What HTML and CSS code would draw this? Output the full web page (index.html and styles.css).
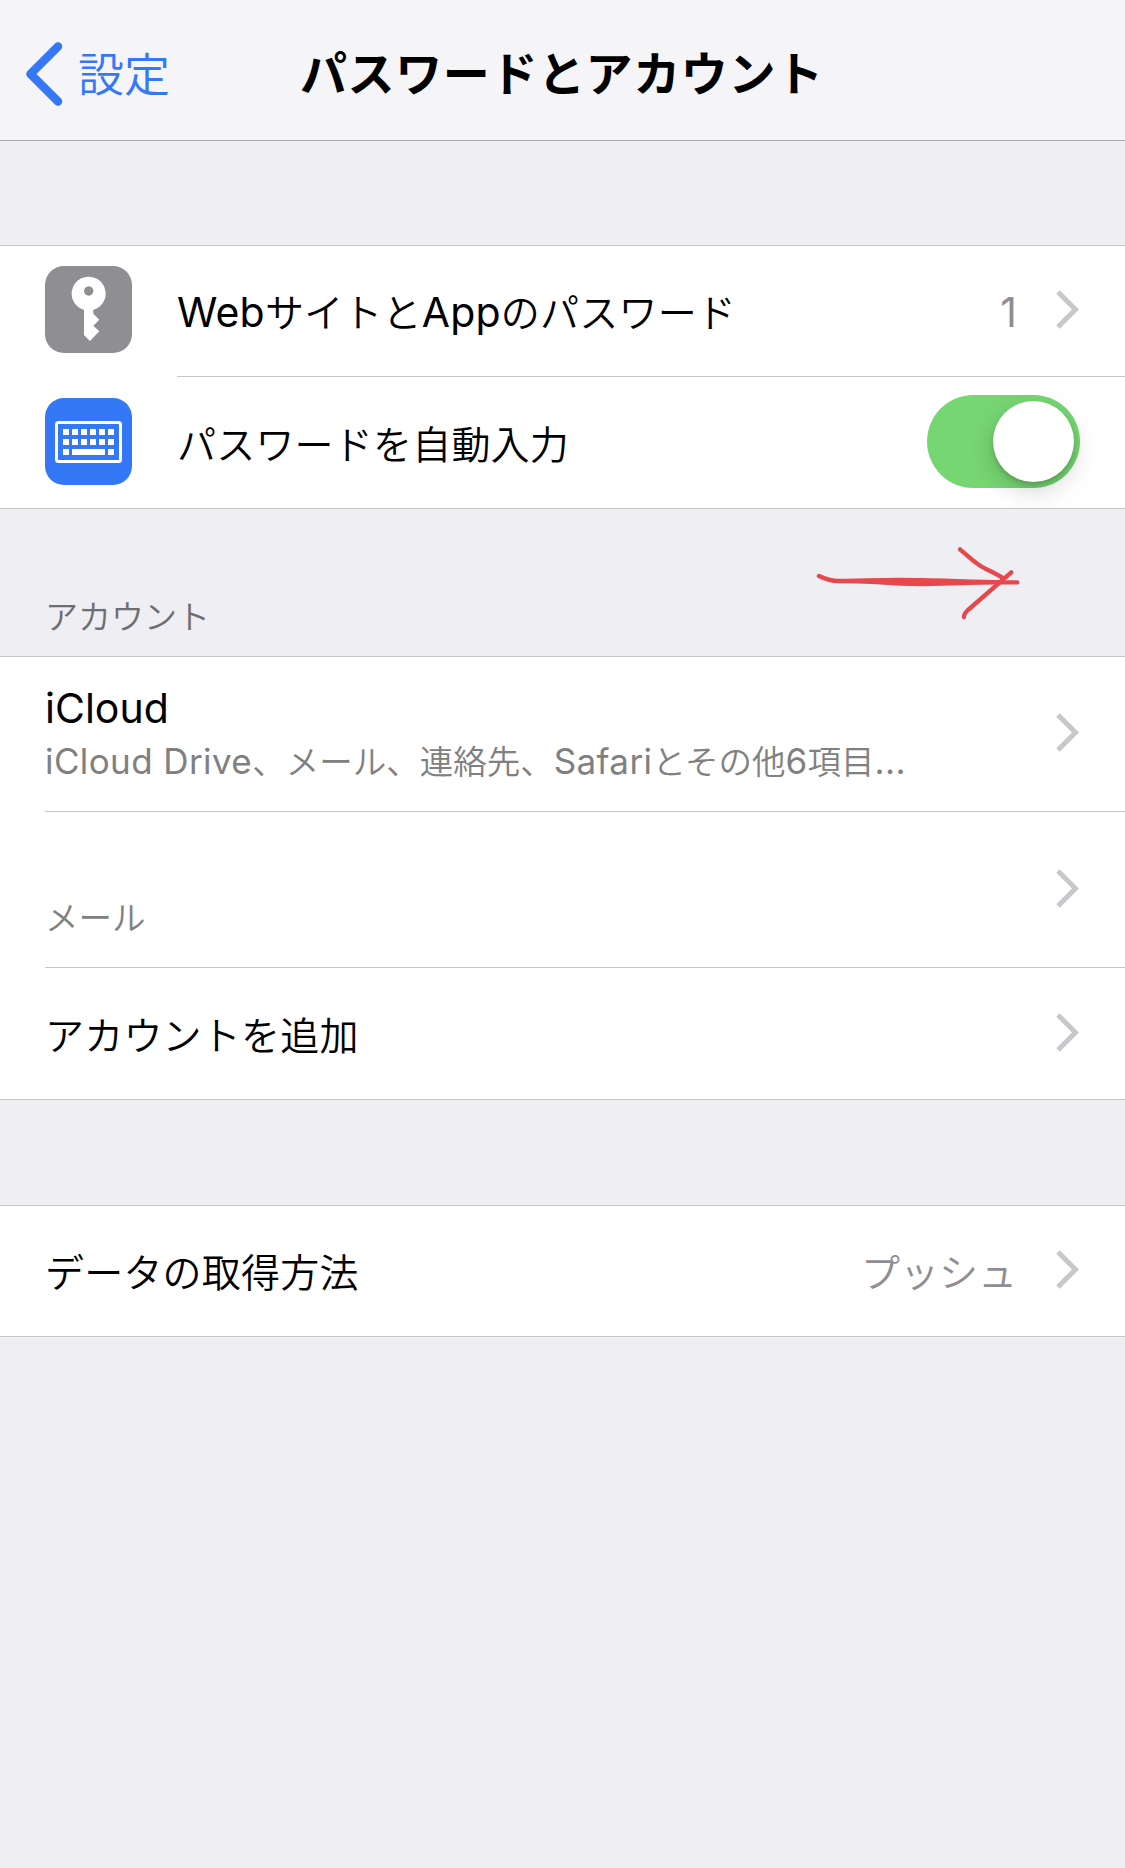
FILE: index.html
```html
<!DOCTYPE html>
<html lang="ja">
<head>
<meta charset="utf-8">
<title>パスワードとアカウント</title>
<link rel="stylesheet" href="styles.css">
</head>
<body>
<svg class="defs" width="0" height="0" aria-hidden="true">
  <symbol id="chevron" viewBox="0 0 24 39"><path d="M2 2 L19.5 19.5 L2 37" fill="none" stroke="#c7c7cc" stroke-width="5"/></symbol>
</svg>
<header class="navbar">
  <a class="back">
    <svg class="back-icon" width="38" height="66" viewBox="0 0 38 66"><path d="M33 5.5 L5.500 33 L33 60.500" fill="none" stroke="#3478f6" stroke-width="8.500" stroke-linecap="round" stroke-linejoin="round"/></svg>
    <span class="back-label">設定</span>
  </a>
  <h1 class="title">パスワードとアカウント</h1>
</header>
<main>
  <section class="group group-passwords">
    <div class="row row-web">
      <svg class="icon" viewBox="0 0 87 87"><rect width="87" height="87" rx="19" fill="#8e8e93"/><path fill="#fff" fill-rule="evenodd" d="M39 44 A17 17 0 1 1 48.300 44 V47.700 L54.300 53.700 L48.300 59.700 L54.300 65.300 L45 75 L39 69 Z M43.700 20.300 a4.700 4.700 0 1 0 .01 0 Z"/></svg>
      <span class="label"><span class="latin">Web</span>サイトと<span class="latin">App</span>のパスワード</span>
      <span class="value"><span class="latin">1</span></span>
      <svg class="chevron"><use href="#chevron"/></svg>
    </div>
    <div class="rule rule-icon"></div>
    <div class="row row-autofill">
      <svg class="icon" viewBox="0 0 87 87"><rect width="87" height="87" rx="19" fill="#3478f6"/><rect x="11.500" y="24.500" width="64" height="39" rx="2" fill="none" stroke="#fff" stroke-width="3"/><path fill="#fff" d="M18 31h6v6h-6zM27 31h6v6h-6zM36 31h6v6h-6zM45 31h6v6h-6zM54 31h6v6h-6zM63 31h6v6h-6zM18 41h6v6h-6zM27 41h6v6h-6zM36 41h6v6h-6zM45 41h6v6h-6zM54 41h6v6h-6zM63 41h6v6h-6zM18 51h6v6h-6zM27 51h33v6h-33zM63 51h6v6h-6z"/></svg>
      <span class="label">パスワードを自動入力</span>
      <span class="switch"><span class="knob"></span></span>
    </div>
  </section>
  <h2 class="group-title">アカウント</h2>
  <svg class="arrow" viewBox="0 0 720 300"><g fill="none" stroke="#e5484d" stroke-width="13" stroke-linecap="round" stroke-linejoin="round"><path d="M57 138 C78 148 92 153 115 153 H170 L600 157 H652"/><path d="M480 58 C510 83 526 101 556 116 C580 127 595 134 610 145"/><path d="M634 127 L504 240 Q491 252 492 261"/></g><path fill="#e5484d" d="M110 148 Q210 144 290 143 Q420 144 600 151 V162 Q480 166 370 169 Q300 169 230 163 Q170 159 110 159 Z"/></svg>
  <section class="group group-accounts">
    <div class="row row-icloud">
      <div class="stack">
        <span class="name">iCloud</span>
        <span class="detail"><span class="latin">iCloud Drive</span>、メール、連絡先、<span class="latin">Safari</span>とその他<span class="latin">6</span>項目<span class="latin dots">...</span></span>
      </div>
      <svg class="chevron"><use href="#chevron"/></svg>
    </div>
    <div class="rule rule-inset"></div>
    <div class="row row-mail">
      <div class="stack">
        <span class="name"></span>
        <span class="detail">メール</span>
      </div>
      <svg class="chevron"><use href="#chevron"/></svg>
    </div>
    <div class="rule rule-inset"></div>
    <div class="row row-add">
      <span class="label">アカウントを追加</span>
      <svg class="chevron"><use href="#chevron"/></svg>
    </div>
  </section>
  <section class="group group-fetch">
    <div class="row row-fetch">
      <span class="label">データの取得方法</span>
      <span class="value">プッシュ</span>
      <svg class="chevron"><use href="#chevron"/></svg>
    </div>
  </section>
</main>
</body>
</html>
```
FILE: styles.css
```css
* { box-sizing: border-box; }
body {
  margin: 0;
  min-height: 1868px;
  position: relative;
  background: #eeeef3;
  color: #000;
  font-family: "Noto Sans CJK JP", sans-serif;
  font-weight: 350;
  font-size: 39px;
}
.defs { position: absolute; }
.navbar {
  height: 141px;
  display: grid;
  grid-template-columns: 300px 1fr 300px;
  align-items: center;
  padding-top: 8px;
  background: #f5f5f8;
  border-bottom: 1px solid #a8a8ad;
}
.back {
  display: flex;
  align-items: center;
  padding-left: 25px;
  gap: 15px;
  color: #3478f6;
  font-size: 46px;
  line-height: 60px;
}
.back-icon { flex: none; }
.back-label { margin-top: -6px; }
.title {
  margin: -6px 0 0;
  padding-right: 5px;
  font-size: 47px;
  line-height: 60px;
  font-weight: 700;
  letter-spacing: .6px;
  text-align: center;
  white-space: nowrap;
}
.group {
  background: #fff;
  border-top: 1px solid #c8c7cc;
  border-bottom: 1px solid #c8c7cc;
}
.group-passwords { margin-top: 104px; }
.row {
  display: flex;
  align-items: center;
  padding: 0 45px;
}
.row-web { height: 130px; padding-bottom: 3px; }
.row-autofill { height: 131px; padding-bottom: 2px; }
.row-icloud { height: 154px; padding-bottom: 3px; }
.row-mail { height: 155px; padding-bottom: 2px; }
.row-add { height: 131px; padding-bottom: 2px; }
.row-fetch { height: 130px; padding-bottom: 3px; }
.rule { height: 1px; background: #c8c7cc; }
.rule-icon { margin-left: 177px; }
.rule-inset { margin-left: 45px; }
.icon {
  width: 87px;
  height: 87px;
  margin-right: 45px;
  flex: none;
}
.label {
  flex: 1;
  line-height: 60px;
  letter-spacing: .2px;
  white-space: nowrap;
}
.latin {
  font-family: Inter, sans-serif;
  font-weight: 400;
  font-size: 41px;
  line-height: 1;
}
.value { color: #8e8e93; line-height: 60px; margin-right: 39px; }
.chevron { width: 24px; height: 39px; flex: none; }
.switch {
  width: 153px;
  height: 93px;
  padding: 6px;
  display: flex;
  justify-content: flex-end;
  border-radius: 47px;
  background: #76d672;
}
.knob {
  width: 81px;
  height: 81px;
  border-radius: 50%;
  background: #fff;
  box-shadow: 0 9px 24px rgba(0, 0, 0, .17), 0 3px 5px rgba(0, 0, 0, .16);
}
.group-title {
  height: 147px;
  margin: 0;
  padding: 81px 45px 0;
  font-size: 33px;
  line-height: 50px;
  font-weight: 350;
  color: #6d6d72;
}
.arrow {
  position: absolute;
  left: 800px;
  top: 530px;
  width: 240px;
  height: 100px;
}
.stack {
  flex: 1;
  display: flex;
  flex-direction: column;
  padding-top: 2px;
}
.name {
  height: 52px;
  font-family: Inter, sans-serif;
  font-weight: 400;
  font-size: 41px;
  line-height: 52px;
}
.detail {
  font-size: 33.500px;
  line-height: 52px;
  color: #808080;
  white-space: nowrap;
}
.detail .latin { font-size: 35px; letter-spacing: .4px; }
.group-fetch { margin-top: 105px; }
```
